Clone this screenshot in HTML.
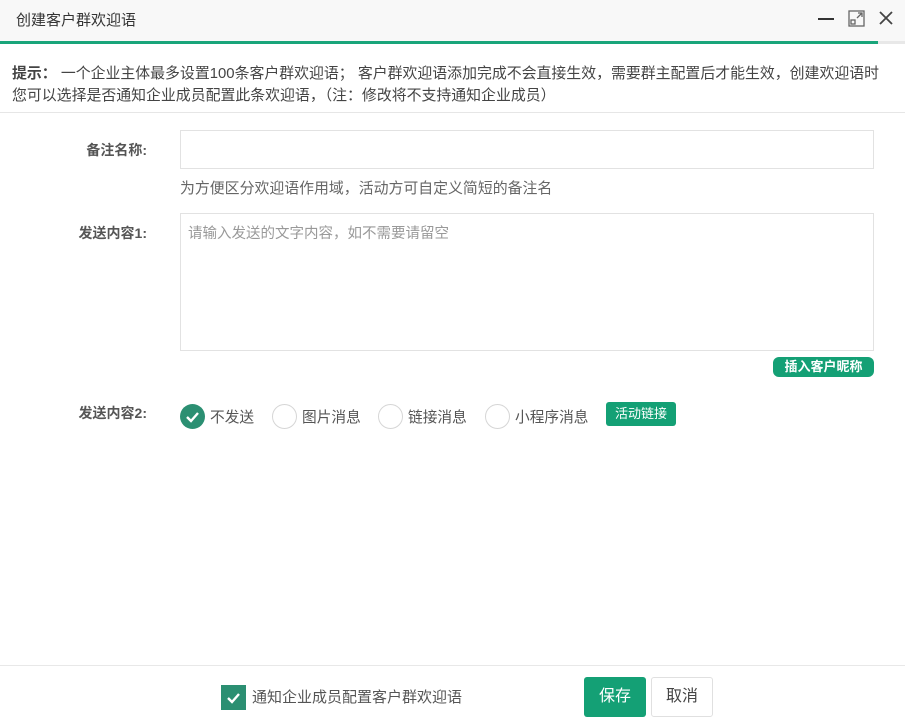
<!DOCTYPE html>
<html><head><meta charset="utf-8"><style>
*{margin:0;padding:0;box-sizing:border-box}
body{width:905px;height:720px;background:#fff;font-family:"Liberation Sans","Noto Sans CJK SC",sans-serif;color:#333;position:relative;overflow:hidden;font-size:14px}
.hd{position:absolute;left:0;top:0;width:905px;height:41px;background:#f8f8f8}
.hd .t{position:absolute;left:16px;top:9px;font-size:15px;color:#333}
.gl{position:absolute;left:0;top:41px;width:878px;height:3px;background:#19a57a}
.gl2{position:absolute;left:878px;top:41px;width:27px;height:3px;background:#e8e8e8}
.tip{position:absolute;left:0;top:44px;width:905px;height:69px;border-bottom:1px solid #e6e6e6;font-size:14.9px;color:#444;padding:19px 0 0 12px;line-height:22px;white-space:nowrap}
.lab{position:absolute;right:758px;font-size:14px;font-weight:bold;color:#555;text-align:right}
.inp{position:absolute;left:180px;width:694px;border:1px solid #e2e2e2;background:#fff}
.g{color:#666;font-size:14.9px;position:absolute}
.btn{position:absolute;background:#14a075;color:#fff;border-radius:3px;font-size:13px;font-weight:bold;text-align:center}
.rd{position:absolute;top:404px;width:25px;height:25px;border:1px solid #d6d6d6;border-radius:50%}
.rt{position:absolute;top:406px;font-size:14.7px;color:#555}
</style></head><body>
<div class="hd"><div class="t">创建客户群欢迎语</div>
<div style="position:absolute;left:818px;top:18px;width:16px;height:2px;background:#333"></div>
<svg style="position:absolute;left:848px;top:10px" width="17" height="17" viewBox="0 0 17 17" fill="none" stroke="#666" stroke-width="1.3"><rect x="1" y="1" width="15" height="15"/><path d="M9 8L14 3M10 3h4v4"/><rect x="3" y="10" width="4" height="4"/></svg>
<svg style="position:absolute;left:879px;top:11px" width="14" height="14" viewBox="0 0 14 14" stroke="#444" stroke-width="1.8"><path d="M1 1L13 13M13 1L1 13"/></svg>
</div>
<div class="gl"></div><div class="gl2"></div>
<div class="tip"><b>提示：</b> 一个企业主体最多设置100条客户群欢迎语； 客户群欢迎语添加完成不会直接生效，需要群主配置后才能生效，创建欢迎语时<br>您可以选择是否通知企业成员配置此条欢迎语，（注：修改将不支持通知企业成员）</div>
<div class="lab" style="top:140px">备注名称:</div>
<div class="inp" style="top:130px;height:39px"></div>
<div class="g" style="left:180px;top:177px">为方便区分欢迎语作用域，活动方可自定义简短的备注名</div>
<div class="lab" style="top:223px">发送内容1:</div>
<div class="inp" style="top:213px;height:138px"><span style="position:absolute;left:7px;top:8px;color:#999;font-size:14.5px">请输入发送的文字内容，如不需要请留空</span></div>
<div class="btn" style="left:773px;top:357px;width:101px;height:20px;line-height:20px;border-radius:6px">插入客户昵称</div>
<div class="lab" style="top:403px">发送内容2:</div>
<div style="position:absolute;left:180px;top:404px;width:25px;height:25px;border-radius:50%;background:#2b8f72"><svg width="25" height="25"><path d="M7 13l4 4 7-8" stroke="#fff" stroke-width="2.4" fill="none"/></svg></div>
<div class="rt" style="left:210px">不发送</div>
<div class="rd" style="left:272px"></div><div class="rt" style="left:302px">图片消息</div>
<div class="rd" style="left:378px"></div><div class="rt" style="left:408px">链接消息</div>
<div class="rd" style="left:485px"></div><div class="rt" style="left:515px">小程序消息</div>
<div class="btn" style="left:606px;top:402px;width:70px;height:24px;line-height:24px;font-weight:normal">活动链接</div>
<div style="position:absolute;left:0;top:665px;width:905px;height:1px;background:#e8e8e8"></div>
<div style="position:absolute;left:221px;top:685px;width:25px;height:25px;background:#2b8f72"><svg width="25" height="25"><path d="M7 13l4 4 7-8" stroke="#fff" stroke-width="2.4" fill="none"/></svg></div>
<div style="position:absolute;left:252px;top:686px;font-size:15px;color:#555">通知企业成员配置客户群欢迎语</div>
<div class="btn" style="left:584px;top:677px;width:62px;height:40px;line-height:40px;font-size:16px;font-weight:normal">保存</div>
<div style="position:absolute;left:651px;top:677px;width:62px;height:40px;line-height:38px;border:1px solid #e0e0e0;border-radius:3px;text-align:center;font-size:16px;color:#444">取消</div>
</body></html>
